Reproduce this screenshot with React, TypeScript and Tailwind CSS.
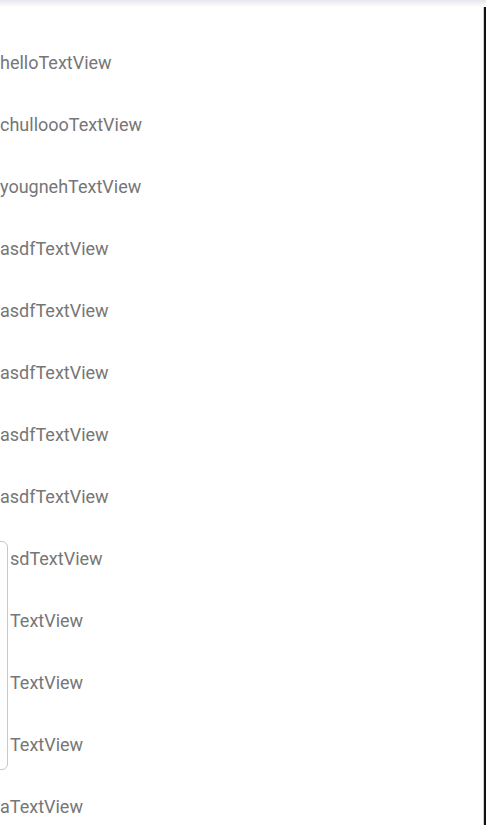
const rows: { text: string; indent?: boolean }[] = [
  { text: 'helloTextView' },
  { text: 'chulloooTextView' },
  { text: 'yougnehTextView' },
  { text: 'asdfTextView' },
  { text: 'asdfTextView' },
  { text: 'asdfTextView' },
  { text: 'asdfTextView' },
  { text: 'asdfTextView' },
  { text: 'sdTextView', indent: true },
  { text: 'TextView', indent: true },
  { text: 'TextView', indent: true },
  { text: 'TextView', indent: true },
  { text: 'aTextView' },
];

export default function App() {
  return (
    <div className="relative w-[486px] h-[825px] overflow-hidden bg-white font-['Roboto',sans-serif]">
      {/* top shadow */}
      <div className="absolute top-0 left-0 right-0 h-[7px] bg-gradient-to-b from-[#e6e5ee] to-white" />

      {/* list */}
      <div className="flex flex-col pt-[32px]">
        {rows.map((row, i) => (
          <div key={i} className="h-[62px] flex items-center">
            <span
              className={
                row.indent
                  ? 'pl-[10px] text-[18px] text-[#767676] leading-none'
                  : 'text-[18px] text-[#767676] leading-none'
              }
            >
              {row.text}
            </span>
          </div>
        ))}
      </div>

      {/* left edge panel */}
      <div className="absolute left-[-12px] top-[541px] w-[20px] h-[229px] bg-white border border-[#c8c8c8] rounded-[6px]" />

      {/* right edge bar */}
      <div className="absolute right-0 top-[7px] bottom-0 w-[3px] flex">
        <div className="w-[1px] bg-[#d0d0d0]" />
        <div className="w-[2px] bg-[#111]" />
      </div>
    </div>
  );
}
